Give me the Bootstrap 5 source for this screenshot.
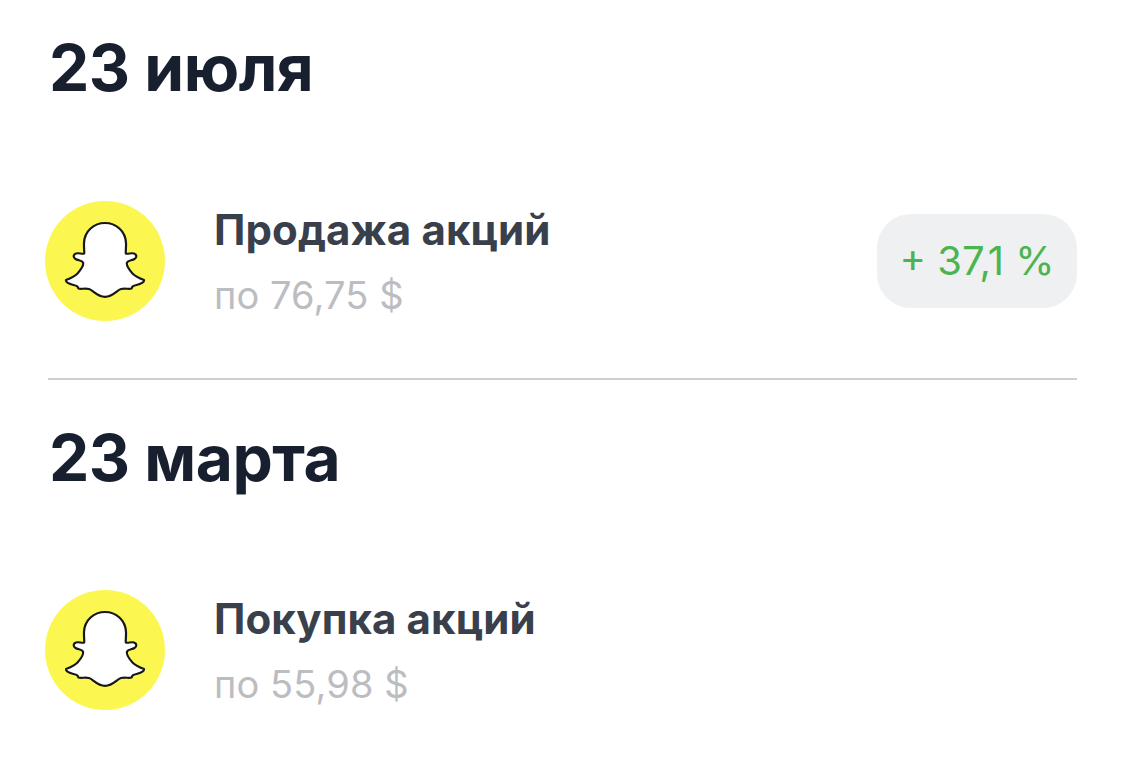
<!DOCTYPE html>
<html lang="ru">
<head>
    <meta charset="UTF-8">
    <title>Сделки</title>
    <link href="https://cdn.jsdelivr.net/npm/bootstrap@5.3.3/dist/css/bootstrap.min.css" rel="stylesheet">
    <style>
        body {
            background-color: #fff;
            font-family: Inter, "Liberation Sans", sans-serif;
            overflow: hidden;
        }

        .lista {
            padding: 0 48px 0 45px;
        }

        .dia {
            font-size: 64px;
            font-weight: 700;
            line-height: 74px;
            color: #182030;
            margin: 0 0 0 4px;
            letter-spacing: -0.5px;
        }

        .bloco-um {
            padding-top: 31px;
        }

        .bloco-dois {
            border-top: 2px solid #cfcfcf;
            margin-left: 3px;
            padding-top: 41px;
        }

        .bloco-dois .dia {
            margin-left: 1px;
        }

        .bloco-dois .operacao {
            margin-left: -3px;
            margin-top: 95px;
        }

        .operacao {
            margin-top: 96px;
            height: 120px;
        }

        .bloco-um .operacao {
            margin-bottom: 57px;
        }

        .logo-snap {
            width: 120px;
            height: 120px;
            flex: none;
        }

        .textos {
            margin-left: 49px;
            padding-top: 2px;
        }

        .titulo {
            font-size: 42px;
            font-weight: 700;
            line-height: 48px;
            color: #3a3f4c;
            margin-bottom: 18px;
            letter-spacing: 0.1px;
        }

        .preco {
            font-size: 38px;
            line-height: 46px;
            color: #bbbdc1;
            letter-spacing: 0.1px;
        }

        .variacao {
            width: 200px;
            height: 94px;
            border-radius: 34px;
            background-color: #eef0f1;
            color: #4cb44f;
            font-size: 40px;
        }
    </style>
</head>
<body>
    <div class="lista">
        <section class="bloco-um">
            <h2 class="dia">23 июля</h2>
            <div class="operacao d-flex align-items-center">
                <svg class="logo-snap" viewBox="0 0 120 120">
                    <use href="#snap"></use>
                </svg>
                <div class="textos flex-grow-1">
                    <div class="titulo">Продажа акций</div>
                    <div class="preco">по 76,75 $</div>
                </div>
                <div class="variacao d-flex align-items-center justify-content-center">+ 37,1 %</div>
            </div>
        </section>
        <section class="bloco-dois">
            <h2 class="dia">23 марта</h2>
            <div class="operacao d-flex align-items-center">
                <svg class="logo-snap" viewBox="0 0 120 120">
                    <use href="#snap"></use>
                </svg>
                <div class="textos flex-grow-1">
                    <div class="titulo">Покупка акций</div>
                    <div class="preco">по 55,98 $</div>
                </div>
            </div>
        </section>
    </div>

    <svg width="0" height="0" class="d-block">
        <defs>
            <g id="snap">
                <circle cx="60" cy="60" r="60" fill="#fcf651"></circle>
                <path fill="#fff" stroke="#17181a" stroke-width="2.2" stroke-linejoin="round"
                    d="M60 22C71 22 80.5 30 81 42C81.2 46 80.6 50 80.8 52.5C83 53.5 86 51.5 89 52.5C92 53.5 92 56.5 89.5 58C87 59.5 83 59.5 82 61.5C81 64 84 68.5 87.5 72.5C90.5 75.5 95 77.5 99 79C99.5 81 96 83 91.5 84C88 84.8 87.5 85 86.5 87.5C84 88.5 80 87 76 88C72 89 68 95.8 60 95.8C52 95.8 48 89 44 88C40 87 36 88.5 33.5 87.5C32.5 85 32 84.8 28.5 84C24 83 20.5 81 21 79C25 77.5 29.5 75.5 32.5 72.5C36 68.5 39 64 38 61.5C37 59.5 33 59.5 30.5 58C28 56.5 28 53.5 31 52.5C34 51.5 37 53.5 39.2 52.5C39.4 50 38.8 46 39 42C39.5 30 49 22 60 22Z"></path>
            </g>
        </defs>
    </svg>
</body>
</html>
